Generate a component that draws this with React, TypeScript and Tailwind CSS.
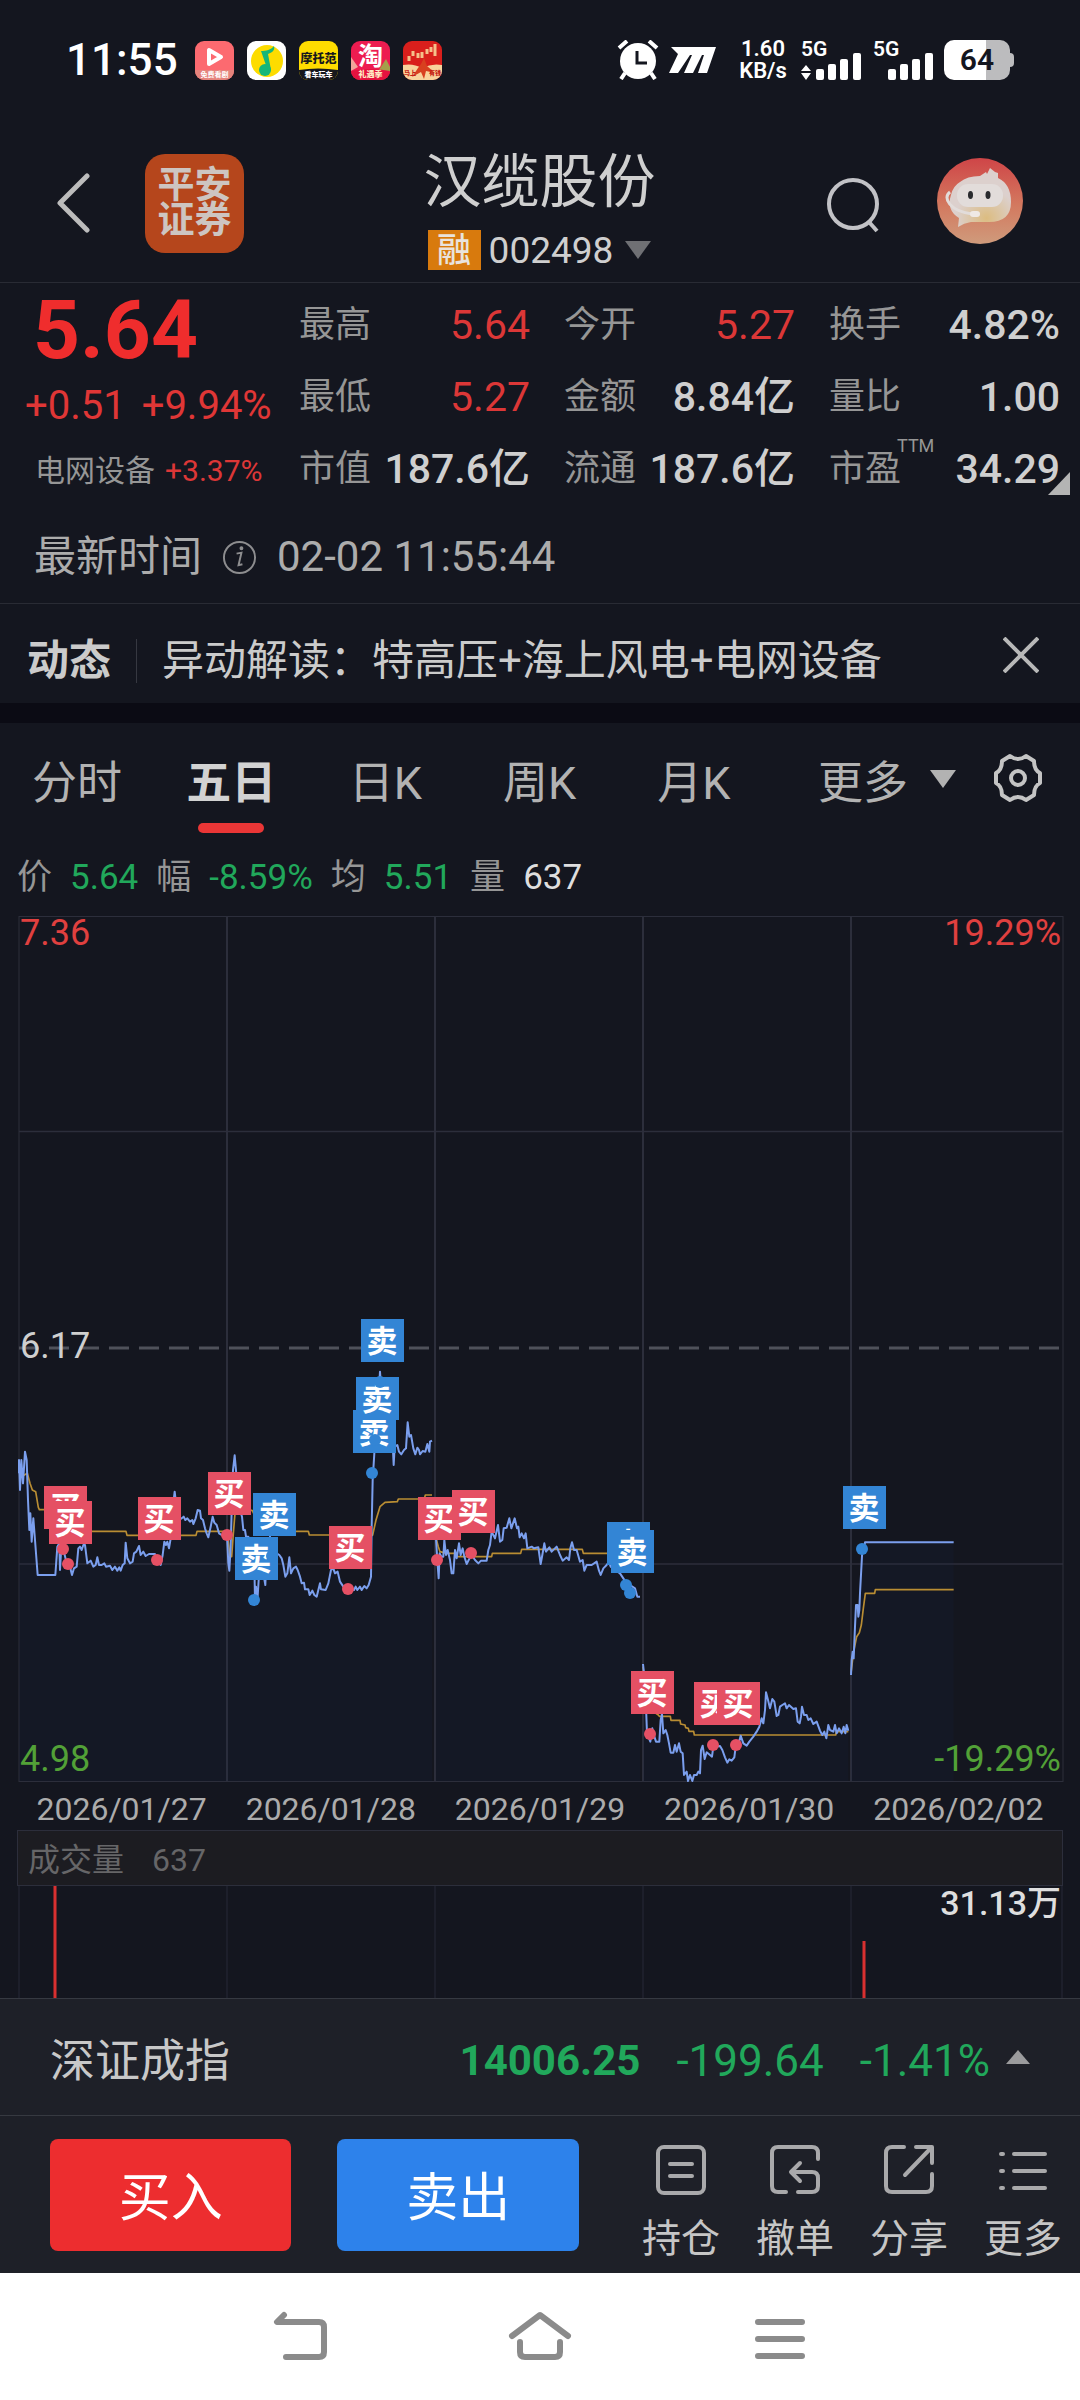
import type { ReactNode } from 'react';

type Tone = 'red' | 'light';
type Stat = { label: string; value: string; tone: Tone; sup?: string };
type Session = { x: number; y: number; base: number; price: string; average: string };

const TONES: Record<Tone, string> = {
  red: 'text-[#dc3737]',
  light: 'font-medium text-[#cfcfcf]',
};

const STATS: Stat[] = [
  { label: '最高', value: '5.64', tone: 'red' },
  { label: '今开', value: '5.27', tone: 'red' },
  { label: '换手', value: '4.82%', tone: 'light' },
  { label: '最低', value: '5.27', tone: 'red' },
  { label: '金额', value: '8.84亿', tone: 'light' },
  { label: '量比', value: '1.00', tone: 'light' },
  { label: '市值', value: '187.6亿', tone: 'light' },
  { label: '流通', value: '187.6亿', tone: 'light' },
  { label: '市盈', value: '34.29', tone: 'light', sup: 'TTM' },
];

const TABS = ['分时', '五日', '日K', '周K', '月K'];
const DATES = ['2026/01/27', '2026/01/28', '2026/01/29', '2026/01/30', '2026/02/02'];
const GRID_X = [227, 435, 643, 851];

// Each session is plotted in thirds of a chart unit, from its own origin
const SESSIONS: Session[] = [
  {
    x: 0, y: 1300, base: 1443,
    price: '57,520 57,480 60,570 64,480 69,550 75,455 80,480 84,600 88,690 91,640 95,725 100,655 105,720 113,825 166,825 172,740 178,730 180,810 184,740 190,748 200,790 206,793 211,805 216,825 222,805 230,800 235,745 240,740 245,750 250,735 255,735 262,790 272,782 280,800 287,795 292,772 297,795 305,795 313,790 318,800 330,797 337,810 345,800 352,812 358,802 362,812 368,795 374,790 377,728 382,775 390,790 398,785 402,760 409,755 417,738 422,765 430,755 437,768 447,762 465,762 472,780 482,795 488,765 493,725 498,735 502,725 507,745 513,710 518,700 521,600 524,575 527,600 535,660 545,655 551,650 556,660 562,655 570,665 577,660 580,672 587,655 593,630 600,632 603,655 609,660 615,685 620,700 625,712 632,680 638,650 643,668 650,675 657,700 670,708 680,706',
    average: '57,490 60,520 64,530 82,520 90,550 97,570 107,575 115,622 118,629 140,629 200,680 276,694 378,694 381,706 588,706 591,694 680,694',
  },
  {
    x: 0, y: 1300, base: 1443,
    price: '681,706 685,790 688,812 692,740 697,560 699,510 704,466 707,500 712,560 720,630 726,650 730,690 735,690 738,710 745,710 750,740 763,790 765,900 768,860 772,905 776,840 790,820 796,855 798,800 805,770 810,710 815,750 838,765 845,775 850,795 856,830 862,820 868,772 873,820 880,805 888,800 893,810 900,830 905,850 912,848 915,868 925,868 929,885 937,872 943,885 950,890 955,870 960,850 963,868 977,870 985,850 993,810 1000,805 1005,820 1013,815 1020,845 1030,860 1045,868 1062,870 1067,860 1072,870 1080,860 1085,870 1093,858 1100,865 1106,855 1113,830 1115,680 1118,540 1123,460 1127,380 1133,330 1140,215 1146,300 1160,350 1170,400 1178,430 1181,495 1184,440 1192,435 1197,455 1204,463 1212,450 1218,445 1223,367 1228,410 1233,405 1240,445 1246,463 1252,443 1257,450 1260,463 1268,453 1276,455 1282,432 1288,455 1290,425 1296,422',
    average: '683,706 690,770 695,770 700,700 705,640 712,620 757,632 770,660 830,694 925,694 928,705 990,705 1100,717 1118,705 1128,660 1140,620 1155,607 1192,605 1195,597 1273,597 1276,585 1296,585',
  },
  {
    x: 400, y: 1300, base: 1443,
    price: '107,700 112,781 116,835 119,760 124,770 130,770 133,720 138,765 143,750 150,780 155,820 160,820 165,750 170,775 177,730 182,765 188,745 193,770 200,792 206,780 215,765 225,780 235,790 243,782 260,782 265,750 270,735 275,695 285,715 294,675 300,725 307,720 311,685 320,683 328,655 334,685 344,655 351,685 355,680 359,712 365,700 372,715 377,700 382,745 395,740 402,745 415,742 422,792 427,765 433,730 438,755 448,742 455,755 470,740 480,765 488,782 500,772 507,780 511,745 516,727 522,750 530,750 540,785 548,780 553,812 560,795 575,795 590,785 597,812 602,825 610,805 620,795 627,785 632,800 660,820 670,835 680,850 690,855 705,865 712,890 720,890',
    average: '107,710 115,740 120,755 140,760 165,760 172,770 275,770 277,760 362,760 365,748 547,748 550,760 700,760',
  },
  {
    x: 620, y: 1460, base: 963,
    price: '69,612 72,640 78,740 81,820 91,845 97,805 100,820 108,845 118,845 122,780 126,762 130,820 137,810 142,825 147,850 152,878 160,878 165,855 170,875 177,850 182,875 188,880 192,945 200,935 204,963 210,945 217,963 222,945 230,945 235,935 240,940 243,870 248,857 254,897 260,877 270,885 276,890 280,860 300,858 307,870 315,892 322,908 328,898 335,902 343,892 347,860 356,850 362,827 370,850 380,857 388,845 400,830 410,815 418,800 425,775 430,790 435,750 438,697 444,720 450,745 457,717 463,725 470,768 475,765 480,740 487,735 495,730 500,745 507,735 520,747 528,745 533,785 539,790 543,770 546,740 552,765 560,765 565,780 572,775 580,792 590,785 600,812 607,825 613,815 619,835 625,795 630,810 640,815 645,795 650,820 657,805 665,820 671,800 676,820 680,795 685,812',
    average: '69,620 80,740 115,765 118,769 151,769 153,781 180,781 182,792 195,795 197,803 205,805 207,814 221,814 223,825 647,825 649,815 685,815',
  },
  {
    x: 620, y: 1460, base: 963,
    price: '693,645 695,600 698,575 701,595 705,500 708,435 713,435 715,470 718,450 720,400 727,270 733,260 735,247 1001,247',
    average: '693,640 700,580 710,530 718,518 724,495 730,445 736,400 764,400 766,389 1001,389',
  },
];

const TRADES: { side: '买' | '卖'; x: number; y: number }[] = [
  { side: '买', x: 44, y: 1486 },
  { side: '买', x: 49, y: 1501 },
  { side: '买', x: 138, y: 1497 },
  { side: '买', x: 208, y: 1472 },
  { side: '卖', x: 235, y: 1537 },
  { side: '卖', x: 253, y: 1493 },
  { side: '买', x: 329, y: 1526 },
  { side: '卖', x: 353, y: 1410 },
  { side: '卖', x: 356, y: 1377 },
  { side: '卖', x: 361, y: 1319 },
  { side: '买', x: 418, y: 1497 },
  { side: '买', x: 452, y: 1490 },
  { side: '卖', x: 607, y: 1522 },
  { side: '卖', x: 611, y: 1530 },
  { side: '买', x: 631, y: 1671 },
  { side: '买', x: 694, y: 1682 },
  { side: '买', x: 717, y: 1682 },
  { side: '卖', x: 843, y: 1486 },
];

function AppIcons() {
  return (
    <div className="flex gap-[13px]">
      <svg viewBox="0 0 39 39" className="size-[39px]">
        <rect width="39" height="39" rx="9" fill="#fc6a70" />
        <path d="M0 29h39v1a9 9 0 0 1-9 9H9a9 9 0 0 1-9-9z" fill="#e5837c" />
        <path d="M14 9v14l12-7z" fill="none" stroke="#fff" strokeWidth="4" strokeLinejoin="round" />
        <text x="19.5" y="36" textAnchor="middle" fontSize="7" fontWeight="700" fill="#fff">免费看剧</text>
      </svg>
      <svg viewBox="0 0 39 39" className="size-[39px]">
        <rect width="39" height="39" rx="9" fill="#fff" />
        <circle cx="20" cy="20" r="16" fill="#fddc00" />
        <circle cx="18" cy="29" r="6" fill="#15b679" />
        <path d="M14 10c5 0 10-1 13-5 1 4-1 6-6 8l3 16-3 1-7-20z" fill="#15b679" />
      </svg>
      <svg viewBox="0 0 39 39" className="size-[39px]">
        <rect width="39" height="39" rx="9" fill="#ffdc00" />
        <path d="M0 29q19-3 39 0v1a9 9 0 0 1-9 9H9a9 9 0 0 1-9-9z" fill="#17181c" />
        <text x="19.5" y="22" textAnchor="middle" fontSize="12" fontWeight="900" fill="#17181c">摩托范</text>
        <text x="19.5" y="36" textAnchor="middle" fontSize="7" fontWeight="900" fill="#fff">看车玩车</text>
      </svg>
      <svg viewBox="0 0 39 39" className="size-[39px]">
        <rect width="39" height="39" rx="9" fill="#ed1c50" />
        <path d="M28 29l7-11 4 8v5z" fill="#a5a04a" />
        <path d="M0 16l7 10-7 4z" fill="#f2a49a" />
        <path d="M0 30q19-4 39 0a9 9 0 0 1-9 9H9a9 9 0 0 1-9-9z" fill="#e5123f" />
        <text x="19.5" y="24" textAnchor="middle" fontSize="25" fontWeight="700" fill="#fff">淘</text>
        <text x="19.5" y="36" textAnchor="middle" fontSize="8" fontWeight="900" fill="#ffe9c4">礼遇季</text>
      </svg>
      <svg viewBox="0 0 39 39" className="size-[39px]">
        <rect width="39" height="39" rx="9" fill="#d91f1c" />
        <path d="M0 24q10-2 19 3 10-5 20-3v6a9 9 0 0 1-9 9H9a9 9 0 0 1-9-9z" fill="#f8d39c" />
        <path d="M6 15v5M10 10v5M15 12v5M19 11v6M24 8v5M28 6v5M32 3v12" stroke="#f5c08a" strokeWidth="3" />
        <path d="M21 17l3 8 8 7-9-2-2 8-3-7-9 5 6-9 3-4z" fill="#d8401f" />
        <text x="7" y="34" textAnchor="middle" fontSize="6" fontWeight="900" fill="#c41f17">马上</text>
        <text x="32" y="34" textAnchor="middle" fontSize="6" fontWeight="900" fill="#c41f17">有钱</text>
      </svg>
    </div>
  );
}

function Signal({ arrows }: { arrows?: boolean }) {
  return (
    <div className="flex h-10 w-[60px] shrink-0">
      <svg viewBox="0 0 60 40" className="h-10 w-[60px] overflow-visible" fill="#fff">
        <text x="0" y="16" fontSize="21" fontWeight="600">5G</text>
        {arrows && <path d="M5 25l5 6H0zM5 40l5-7H0z" />}
        <rect x="15" y="29" width="8" height="11" rx="2" />
        <rect x="27" y="24" width="8" height="16" rx="2" />
        <rect x="39" y="19" width="8" height="21" rx="2" />
        <rect x="52" y="13" width="8" height="27" rx="2" />
      </svg>
    </div>
  );
}

function StatusBar() {
  return (
    <div className="flex h-[120px] items-center justify-between pl-[66px] pr-[66px] text-white">
      <div className="flex items-center gap-[17px]">
        <span className="text-[44px] font-medium leading-none">11:55</span>
        <AppIcons />
      </div>
      <div className="flex items-center">
        <svg viewBox="0 0 42 40" className="h-10 w-[42px]" fill="#fff">
          <circle cx="21" cy="21" r="18" />
          <path d="M2 8l8-7M40 8l-8-7M8 33l-4 6M34 33l4 6" stroke="#fff" strokeWidth="4" />
          <path d="M20 11v12h10" fill="none" stroke="#14161f" strokeWidth="3" />
        </svg>
        <svg viewBox="0 0 48 26" className="ml-2.5 h-[26px] w-12">
          <path d="M2 0h45L38 26h-9l6-18h-2l-9 18h-9l8-18h-2L9 26H0L9 7z" fill="#fff" />
        </svg>
        <div className="ml-5 flex w-[52px] flex-col items-center text-[22px] font-semibold leading-[22px]">
          <span>1.60</span>
          <span>KB/s</span>
        </div>
        <div className="ml-3 flex gap-3">
          <Signal arrows />
          <Signal />
        </div>
        <div className="ml-[11px] flex items-center">
          <div className="flex h-10 w-[66px] items-center justify-center rounded-[10px] bg-linear-to-r from-white from-64% to-[#bcbcbe] to-64% text-[30px] font-semibold leading-none text-[#14161f]">64</div>
          <div className="h-3.5 w-1 rounded-r-sm bg-[#bcbcbe]" />
        </div>
      </div>
    </div>
  );
}

function Header() {
  return (
    <header className="grid h-[163px] grid-cols-[1fr_auto_1fr] items-center border-b border-[#292b34] pl-[56px] pr-[57px]">
      <div className="flex items-center gap-[54px] pt-1">
        <button aria-label="返回">
          <svg viewBox="0 0 35 60" className="h-[60px] w-[35px]" fill="none" stroke="#bcbcbc" strokeWidth="5" strokeLinecap="round" strokeLinejoin="round">
            <path d="M31 3L4 30l27 27" />
          </svg>
        </button>
        <div className="flex size-[99px] flex-col items-center justify-center rounded-[20px] bg-[#b5461c] text-[37px] font-bold leading-[35px] text-[#cdc5c1]">
          <span>平安</span>
          <span>证券</span>
        </div>
      </div>
      <div className="flex flex-col items-center gap-[18px] pt-5">
        <h1 className="text-[58px] leading-[60px] text-[#cfcfcf]">汉缆股份</h1>
        <button className="flex items-center text-[37px] leading-none text-[#cfcfcf]">
          <span className="mr-2 flex h-10 w-[53px] items-center justify-center bg-[#d87a0d] text-[34px] font-medium text-[#e9e3dc]">融</span>
          002498
          <svg viewBox="0 0 26 18" className="ml-3 h-[18px] w-[26px] fill-[#6f7074]"><path d="M0 0h26L13 18z" /></svg>
        </button>
      </div>
      <div className="flex items-center justify-end gap-[58px]">
        <button aria-label="搜索" className="pt-2">
          <svg viewBox="0 0 52 56" className="h-14 w-[52px]" fill="none" stroke="#c2c2c6" strokeWidth="4">
            <circle cx="26" cy="27" r="24" />
            <path d="M42 45l8 9" />
          </svg>
        </button>
        <button aria-label="智能助手">
          <svg viewBox="0 0 86 86" className="size-[86px]">
            <defs>
              <linearGradient id="avatar" x2="0" y2="1">
                <stop stopColor="#cf4547" />
                <stop offset="0.55" stopColor="#d3795f" />
                <stop offset="1" stopColor="#cf9b7c" />
              </linearGradient>
              <radialGradient id="belly" cx="0.6" cy="0.85" r="0.5">
                <stop stopColor="#dcbc80" />
                <stop offset="1" stopColor="#dcd0cd" />
              </radialGradient>
            </defs>
            <circle cx="43" cy="43" r="43" fill="url(#avatar)" />
            <path d="M23 24q7-6 20-6l6-4 1 2 3-6 5 4 3 1v5q13 6 13 24 0 20-22 20H34q-7 1-13 5l1-9Q9 52 14 37q2-9 9-13z" fill="url(#belly)" />
            <rect x="20" y="26" width="46" height="23" rx="11" fill="#e2dcda" />
            <ellipse cx="33.500" cy="37" rx="2.500" ry="4" fill="#292a2d" />
            <ellipse cx="51" cy="37" rx="2.500" ry="4" fill="#292a2d" />
            <path d="M13 34c-8 6 0 19 22 22" fill="none" stroke="#e2dcda" strokeWidth="3" />
            <rect x="33" y="53" width="10" height="6" rx="3" fill="#efe9e5" />
          </svg>
        </button>
      </div>
    </header>
  );
}

function Quote() {
  return (
    <section className="relative grid grid-cols-[274px_1fr] pl-[25px] pr-5 pt-1.5">
      <div className="leading-none">
        <div className="flex h-[82px] items-center pl-2 text-[82px] font-bold text-[#ef2d2d]">5.64</div>
        <div className="flex h-[70px] items-center gap-4 text-[40px] text-[#e03636]">
          <span>+0.51</span>
          <span>+9.94%</span>
        </div>
        <div className="flex h-[60px] items-center gap-2.5 pl-2.5 text-[30px]">
          <span className="text-[#969696]">电网设备</span>
          <span className="text-[#dc3737]">+3.37%</span>
        </div>
      </div>
      <dl className="grid grid-cols-3 gap-x-[34px]">
        {STATS.map((s) => (
          <div key={s.label} className="relative flex h-[72px] items-center justify-between leading-none">
            <dt className="text-[36px] text-[#969696]">{s.label}</dt>
            {s.sup && <span className="absolute left-[68px] top-1 text-[18px] text-[#969696]">{s.sup}</span>}
            <dd className={`text-[41px] ${TONES[s.tone]}`}>{s.value}</dd>
          </div>
        ))}
      </dl>
      <svg viewBox="0 0 22 23" className="absolute bottom-2.5 right-2.5 h-[23px] w-[22px] fill-[#b4b4b4]"><path d="M22 0v23H0z" /></svg>
    </section>
  );
}

function Tabs() {
  return (
    <nav className="flex h-[110px] text-[45px] leading-none text-[#b2b2b2]">
      <div className="grid flex-1 grid-cols-5">
        {TABS.map((t) => (
          <button key={t} className="relative pt-2.5">
            <span className={t === '五日' ? 'font-bold text-[#d2d2d2]' : ''}>{t}</span>
            {t === '五日' && <span className="absolute bottom-0 left-1/2 h-2.5 w-[66px] -translate-x-1/2 rounded-[5px] bg-[#ea3636]" />}
          </button>
        ))}
      </div>
      <div className="flex w-[309px] items-center justify-between pl-[47px] pr-[37px]">
        <button className="flex items-center gap-[22px] pt-2.5">
          更多
          <svg viewBox="0 0 26 18" className="mb-2 h-[18px] w-[26px] fill-[#b2b2b2]"><path d="M0 0h26L13 18z" /></svg>
        </button>
        <button aria-label="设置">
          <svg viewBox="0 0 50 50" className="size-[50px]" fill="none" stroke="#c4c4c4" strokeWidth="4" strokeLinejoin="round">
            <path d="M17 3q8 6 16 0l8 5q0 9 6 12v10q-6 3-6 12l-8 5q-8-6-16 0l-8-5q0-9-6-12V20q6-3 6-12z" />
            <circle cx="25" cy="25" r="7" />
          </svg>
        </button>
      </div>
    </nav>
  );
}

function PriceChart() {
  return (
    <svg viewBox="17 916 1046 866" className="block w-full overflow-visible" fontSize="36">
      <g fill="none" stroke="#2c2e3b">
        <rect x="19" y="916.500" width="1044" height="865" strokeWidth="1" />
        <path d="M19 1131.500H1063M19 1564H1063" strokeWidth="1.500" />
        {GRID_X.map((x) => <path key={x} d={`M${x} 916V1781`} strokeWidth="2" />)}
      </g>
      <path d="M19 1348H1063" stroke="#4f515a" strokeWidth="3" strokeDasharray="20 10" />
      {SESSIONS.map((s, i) => {
        const points = s.price.split(' ');
        const first = points[0].split(',')[0];
        const last = points[points.length - 1].split(',')[0];
        return (
          <g key={i} transform={`translate(${s.x} ${s.y}) scale(${1 / 3})`} fill="none" strokeLinejoin="round">
            <polygon points={`${first},${s.base} ${s.price} ${last},${s.base}`} fill="#1a2a55" fillOpacity="0.120" />
            <polyline points={s.average} stroke="#b98d33" strokeWidth="5" />
            <polyline points={s.price} stroke="#7b9fee" strokeWidth="6" />
          </g>
        );
      })}
      <text x="20" y="945" fill="#e0403f">7.36</text>
      <text x="1061" y="945" textAnchor="end" fill="#e0403f">19.29%</text>
      <text x="20" y="1358" fill="#cfcfcf">6.17</text>
      <text x="20" y="1771" fill="#52a137">4.98</text>
      <text x="1061" y="1771" textAnchor="end" fill="#52a137">-19.29%</text>
      {TRADES.map((t, i) => {
        const fill = t.side === '买' ? '#e55064' : '#3385d5';
        return (
          <g key={i} fill={fill}>
            <rect x={t.x} y={t.y} width="43" height="43" />
            <text x={t.x + 21} y={t.y + 33} textAnchor="middle" fontSize="31" fontWeight="700" fill="#fff">{t.side}</text>
            <circle cx={t.x + 19} cy={t.y + 63} r="6" />
          </g>
        );
      })}
    </svg>
  );
}

function Volume() {
  return (
    <>
      <div className="flex h-14 items-center gap-7 border border-[#2c2e3b] bg-[#1c1c21] pl-2.5 pt-1 text-[32px] leading-none text-[#666668]">
        <span>成交量</span>
        <span>637</span>
      </div>
      <div className="relative">
        <svg viewBox="17 1886 1046 112" className="block w-full">
          {[19, ...GRID_X, 1062].map((x) => <path key={x} d={`M${x} 1886V1998`} stroke="#1d1f2b" strokeWidth="2" />)}
          <path d="M55 1886V1998M864 1941V1998" stroke="#d93030" strokeWidth="3" />
        </svg>
        <span className="absolute right-0.5 top-0 text-[34px] font-medium leading-[34px] text-[#dedede]">31.13万</span>
      </div>
    </>
  );
}

function Action({ label, children }: { label: string; children: ReactNode }) {
  return (
    <button className="flex flex-col items-center gap-6 text-[39px] leading-[40px] text-[#c6c6c6]">
      <svg viewBox="0 0 50 50" className="size-[50px]" fill="none" stroke="#a9a9ab" strokeWidth="4" strokeLinejoin="round" strokeLinecap="round">
        {children}
      </svg>
      {label}
    </button>
  );
}

function TradeBar() {
  return (
    <div className="flex h-[158px] items-start justify-between border-t border-[#363941] pl-[50px] pr-[18px] pt-[23px]">
      <div className="flex flex-1 gap-[46px] text-[52px] leading-none text-white">
        <button className="h-[112px] flex-1 rounded-lg bg-[#ed2d2f] pt-2">买入</button>
        <button className="h-[112px] flex-1 rounded-lg bg-[#2d82eb] pt-2">卖出</button>
      </div>
      <div className="ml-[63px] flex gap-9 pt-1.5">
        <Action label="持仓">
          <rect x="2" y="2" width="46" height="46" rx="6" />
          <path d="M14 19h22M14 31h22" />
        </Action>
        <Action label="撤单">
          <path d="M16 47H8q-6 0-6-6V8q0-6 6-6h34q6 0 6 6v6M30 18l-9 9 9 9M22 27h20q6 0 6 6v8q0 6-6 6H28" />
        </Action>
        <Action label="分享">
          <path d="M20 2H8Q2 2 2 8v33q0 6 6 6h34q6 0 6-6V29M32 2h16v16M47 3L21 30" />
        </Action>
        <Action label="更多">
          <path d="M3 9h2M16 9h31M3 26h2M16 26h31M3 43h2M16 43h31" />
        </Action>
      </div>
    </div>
  );
}

export default function App() {
  return (
    <main className="overflow-hidden bg-[#14161f] font-['Roboto','Noto_Sans_CJK_SC',sans-serif]">
      <StatusBar />
      <Header />
      <Quote />
      <div className="flex h-[99px] items-center border-b border-[#292b34] pl-[34px] pt-1.5 text-[42px] leading-none text-[#acacac]">
        <span>最新时间</span>
        <svg viewBox="0 0 36 36" className="mx-5 size-[35px]" fill="none" stroke="#8d8d8f" strokeWidth="2">
          <circle cx="18" cy="18" r="16" />
          <path d="M15 14l5-1-3 13 4-1" />
          <circle cx="20" cy="8.500" r="1" />
        </svg>
        <span>02-02 11:55:44</span>
      </div>
      <div className="flex h-[99px] items-center pl-[27px] pr-[41px] pt-3.5 text-[42px] leading-none text-[#cbcbcb]">
        <span className="font-bold">动态</span>
        <span className="mx-[25px] h-11 w-px bg-[#363841]" />
        <a href="#news" className="flex-1">异动解读：特高压+海上风电+电网设备</a>
        <button aria-label="关闭" className="pb-3">
          <svg viewBox="0 0 36 36" className="size-9" fill="none" stroke="#b8b8b8" strokeWidth="4"><path d="M1 1l34 34M35 1L1 35" /></svg>
        </button>
      </div>
      <div className="h-5 bg-[#0b0b14]" />
      <Tabs />
      <div className="flex h-[83px] items-center gap-[18px] pl-[17px] pt-1.5 text-[35px] leading-none text-[#969696]">
        <span>价</span>
        <span className="text-[#21a85b]">5.64</span>
        <span>幅</span>
        <span className="text-[#21a85b]">-8.59%</span>
        <span>均</span>
        <span className="text-[#21a85b]">5.51</span>
        <span>量</span>
        <span className="text-[#dedede]">637</span>
      </div>
      <section className="px-[17px]">
        <PriceChart />
        <div className="grid h-12 grid-cols-5 items-center pt-1.5 text-center text-[32px] leading-none text-[#acacac]">
          {DATES.map((d) => <span key={d}>{d}</span>)}
        </div>
        <Volume />
      </section>
      <footer className="bg-[#1e2028]">
        <button className="flex h-[117px] w-full items-center border-t border-[#363941] pl-[50px] pr-[50px] pt-2 text-[44px] leading-none text-[#21a85b]">
          <span className="flex-1 text-left text-[45px] text-[#c8c8c8]">深证成指</span>
          <span className="text-[42px] font-bold">14006.25</span>
          <span className="ml-9">-199.64</span>
          <span className="ml-9">-1.41%</span>
          <svg viewBox="0 0 24 14" className="mb-2 ml-4 h-3.5 w-6 fill-[#9b9b9d]"><path d="M12 0l12 14H0z" /></svg>
        </button>
        <TradeBar />
      </footer>
      <div className="grid h-[126px] grid-cols-[1fr_240px_1fr] items-center bg-white">
        <button aria-label="系统返回" className="flex justify-end pr-[92px]">
          <svg viewBox="0 0 56 50" className="h-[50px] w-14" fill="none" stroke="#8b8b8b" strokeWidth="6" strokeLinecap="round" strokeLinejoin="round">
            <path d="M12 4L5 11h42q5 0 5 5v25q0 5-5 5H14" />
          </svg>
        </button>
        <button aria-label="主页" className="flex justify-center">
          <svg viewBox="0 0 64 50" className="h-[50px] w-16" fill="none" stroke="#8b8b8b" strokeWidth="6" strokeLinecap="round" strokeLinejoin="round">
            <path d="M4 25L32 4l28 21M12 31v10q0 5 5 5h30q5 0 5-5V31" />
          </svg>
        </button>
        <button aria-label="最近任务" className="flex pl-[94px]">
          <svg viewBox="0 0 52 50" className="h-[50px] w-[52px]" fill="none" stroke="#8b8b8b" strokeWidth="6" strokeLinecap="round">
            <path d="M4 11h44M4 28h44M4 45h44" />
          </svg>
        </button>
      </div>
    </main>
  );
}
